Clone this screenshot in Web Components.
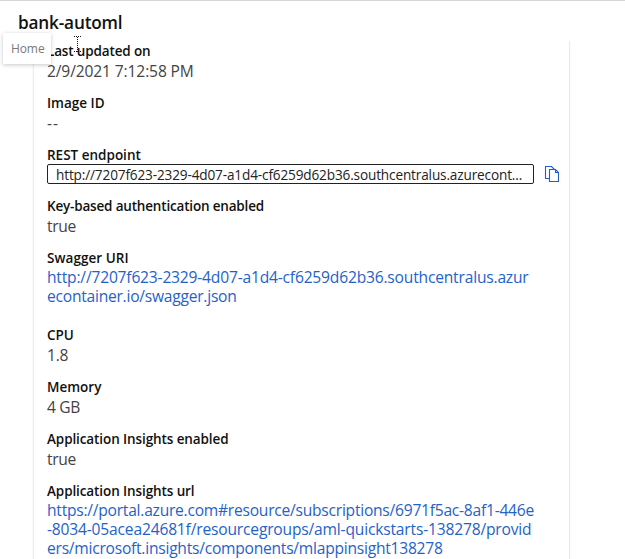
<!DOCTYPE html>
<html lang="en">
<head>
<meta charset="utf-8">
<title>bank-automl</title>
<style>
html,body{margin:0;height:559px;overflow:hidden;background:#fff}
body{font-family:"Open Sans","Noto Sans",sans-serif;color:#111}
.line2{letter-spacing:-.18px}
.line3{letter-spacing:-.24px}
</style>
</head>
<body>
<script>
const define = (name, html) => customElements.define(name, class extends HTMLElement {
  connectedCallback() {
    if (this.shadowRoot) return;
    this.attachShadow({ mode: 'open' }).innerHTML = html;
    for (const a of ['ls', 'h', 'gap']) {
      if (this.hasAttribute(a)) this.style.setProperty('--' + a, this.getAttribute(a) + 'px');
    }
  }
});

define('endpoint-page', `<style>
:host{display:flex;flex-direction:column;position:relative;height:559px;box-sizing:border-box;border-top:1px solid #d6d6d6;overflow:hidden}
</style><slot></slot>`);

define('page-title', `<style>
:host{display:block;flex:none;height:40px;padding:9px 0 0 18px;box-sizing:border-box;font-size:17.2px;line-height:26px;font-weight:600;letter-spacing:-.17px;color:#111}
</style><slot></slot>`);

define('detail-panel', `<style>
:host{display:block;flex:none;width:537px;height:530px;margin-left:33px;padding-left:14px;box-sizing:border-box;border-left:1px solid #ececec;border-right:1px solid #e9e9e9;box-shadow:0 2px 2px rgba(0,0,0,.06)}
</style><slot></slot>`);

define('detail-item', `<style>
:host{display:block;height:var(--h,52px);margin-left:-1px}
.label{font-size:13.5px;line-height:20px;font-weight:600;letter-spacing:var(--ls,0px);height:20px;margin-bottom:var(--gap,1px);white-space:nowrap}
</style><div class="label"><slot name="label"></slot></div><slot></slot>`);

define('value-text', `<style>
:host{display:block;font-size:15.6px;line-height:19px;letter-spacing:var(--ls,0px);white-space:nowrap;color:#444}
</style><slot></slot>`);

define('link-text', `<style>
:host{display:block;color:#1f62c9;font-size:15.6px;line-height:19px;letter-spacing:var(--ls,0px);white-space:nowrap}
</style><slot></slot>`);

define('copy-field', `<style>
:host{display:flex;align-items:center;gap:10px}
.box{width:487px;height:20px;box-sizing:border-box;border:1px solid #222;border-radius:2px;padding-left:8px;font-size:13.6px;line-height:20px;letter-spacing:-.145px;color:#222;white-space:nowrap}
svg{display:block}
</style><div class="box"><slot></slot></div>
<svg width="16" height="18" viewBox="0 0 16 18" fill="none" stroke="#1f5fc9" stroke-width="1.1"><path d="M5.5 13.5H1.5V1.5H7.5L10.5 4.5M5.5 4.5H11.5L14.5 7.5V16.5H5.5ZM11.5 4.5V7.5H14.5"/></svg>`);

define('hover-tip', `<style>
:host{position:absolute;left:3px;top:32px;width:48px;height:31px;box-sizing:border-box;padding-left:8px;font-size:12px;letter-spacing:-.1px;line-height:32px;background:#fff;color:#7a7a7a;box-shadow:0 1px 4px rgba(0,0,0,.22)}
</style><slot></slot>`);

define('text-cursor', `<style>
:host{position:absolute;left:74px;top:35px}svg{display:block}
</style><svg width="8" height="18" shape-rendering="crispEdges" stroke="#111" stroke-width="1" stroke-dasharray="1 1"><path d="M0 .5H7M3.5 1V17M0 15.5H7"/></svg>`);
</script>
<endpoint-page>
<page-title>bank-automl</page-title>
<detail-panel>
<detail-item ls="-.15"><span slot="label">Last updated on</span><value-text ls="-.13">2/9/2021 7:12:58 PM</value-text></detail-item>
<detail-item><span slot="label">Image ID</span><value-text ls="1">--</value-text></detail-item>
<detail-item h="51" gap="-1"><span slot="label">REST endpoint</span><copy-field>http://7207f623-2329-4d07-a1d4-cf6259d62b36.southcentralus.azurecont...</copy-field></detail-item>
<detail-item ls="-.18"><span slot="label">Key-based authentication enabled</span><value-text ls="-.35">true</value-text></detail-item>
<detail-item h="77" gap="0" ls=".05"><span slot="label">Swagger URI</span><link-text ls="-.19">http://7207f623-2329-4d07-a1d4-cf6259d62b36.southcentralus.azur<br><span class="line3">econtainer.io/swagger.json</span></link-text></detail-item>
<detail-item><span slot="label">CPU</span><value-text ls="-.2">1.8</value-text></detail-item>
<detail-item><span slot="label">Memory</span><value-text ls="-.35">4 GB</value-text></detail-item>
<detail-item ls="-.1"><span slot="label">Application Insights enabled</span><value-text ls="-.35">true</value-text></detail-item>
<detail-item gap="0" ls="-.1"><span slot="label">Application Insights url</span><link-text ls="-.24">https://portal.azure.com#resource/subscriptions/6971f5ac-8af1-446e<br><span class="line2">-8034-05acea24681f/resourcegroups/aml-quickstarts-138278/provid</span><br><span class="line3">ers/microsoft.insights/components/mlappinsight138278</span></link-text></detail-item>
</detail-panel>
<hover-tip>Home</hover-tip>
<text-cursor></text-cursor>
</endpoint-page>
</body>
</html>
